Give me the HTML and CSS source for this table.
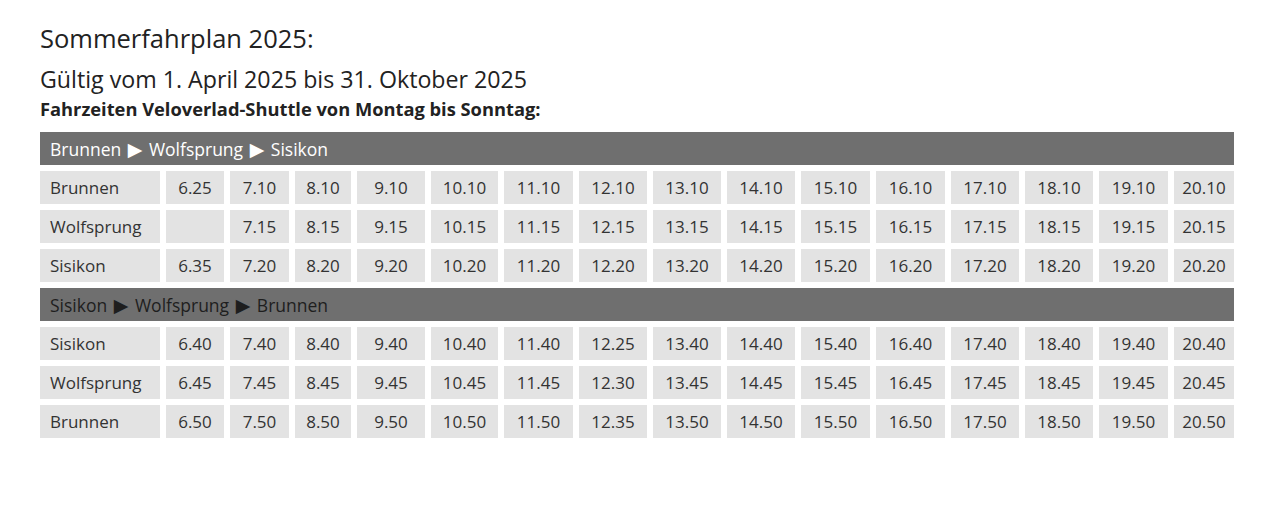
FILE: index.html
```html
<!DOCTYPE html>
<html lang="de">
<head>
<meta charset="utf-8">
<title>Sommerfahrplan 2025</title>
<link rel="stylesheet" href="styles.css">
</head>
<body>
<div class="page">
  <h1 class="title">Sommerfahrplan 2025:</h1>
  <h2 class="subtitle">Gültig vom 1. April 2025 bis 31. Oktober 2025</h2>
  <p class="lead">Fahrzeiten Veloverlad-Shuttle von Montag bis Sonntag:</p>
  <table class="timetable">
    <colgroup>
      <col class="w120"><col class="w58"><col class="w59"><col class="w56">
      <col class="w68"><col class="w67"><col class="w69"><col class="w68">
      <col class="w68"><col class="w68"><col class="w69"><col class="w69">
      <col class="w68"><col class="w68"><col class="w69"><col class="w60">
    </colgroup>
    <tbody>
      <tr><td class="route route-light" colspan="16">Brunnen <span class="arrow">▶</span> Wolfsprung <span class="arrow">▶</span> Sisikon</td></tr>
      <tr><td class="stop">Brunnen</td><td>6.25</td><td>7.10</td><td>8.10</td><td>9.10</td><td>10.10</td><td>11.10</td><td>12.10</td><td>13.10</td><td>14.10</td><td>15.10</td><td>16.10</td><td>17.10</td><td>18.10</td><td>19.10</td><td>20.10</td></tr>
      <tr><td class="stop">Wolfsprung</td><td></td><td>7.15</td><td>8.15</td><td>9.15</td><td>10.15</td><td>11.15</td><td>12.15</td><td>13.15</td><td>14.15</td><td>15.15</td><td>16.15</td><td>17.15</td><td>18.15</td><td>19.15</td><td>20.15</td></tr>
      <tr><td class="stop">Sisikon</td><td>6.35</td><td>7.20</td><td>8.20</td><td>9.20</td><td>10.20</td><td>11.20</td><td>12.20</td><td>13.20</td><td>14.20</td><td>15.20</td><td>16.20</td><td>17.20</td><td>18.20</td><td>19.20</td><td>20.20</td></tr>
      <tr><td class="route route-dark" colspan="16">Sisikon <span class="arrow">▶</span> Wolfsprung <span class="arrow">▶</span> Brunnen</td></tr>
      <tr><td class="stop">Sisikon</td><td>6.40</td><td>7.40</td><td>8.40</td><td>9.40</td><td>10.40</td><td>11.40</td><td>12.25</td><td>13.40</td><td>14.40</td><td>15.40</td><td>16.40</td><td>17.40</td><td>18.40</td><td>19.40</td><td>20.40</td></tr>
      <tr><td class="stop">Wolfsprung</td><td>6.45</td><td>7.45</td><td>8.45</td><td>9.45</td><td>10.45</td><td>11.45</td><td>12.30</td><td>13.45</td><td>14.45</td><td>15.45</td><td>16.45</td><td>17.45</td><td>18.45</td><td>19.45</td><td>20.45</td></tr>
      <tr><td class="stop">Brunnen</td><td>6.50</td><td>7.50</td><td>8.50</td><td>9.50</td><td>10.50</td><td>11.50</td><td>12.35</td><td>13.50</td><td>14.50</td><td>15.50</td><td>16.50</td><td>17.50</td><td>18.50</td><td>19.50</td><td>20.50</td></tr>
    </tbody>
  </table>
</div>
</body>
</html>
```
FILE: styles.css
```css
html, body {
  margin: 0;
  padding: 0;
  background: #ffffff;
}

.page {
  padding: 23px 40px 0 40px;
  font-family: "Open Sans", "Noto Sans", "DejaVu Sans", sans-serif;
  color: #222222;
}

.title {
  margin: 0;
  font-size: 25.5px;
  line-height: 30px;
  font-weight: 400;
  color: #222222;
}

.subtitle {
  margin: 12px 0 0 0;
  font-size: 23.2px;
  line-height: 28px;
  font-weight: 400;
  color: #222222;
}

.lead {
  margin: 5px 0 0 0;
  font-size: 18.3px;
  line-height: 22px;
  font-weight: 700;
  color: #222222;
}

.timetable {
  margin: 6px -6px 0 -6px;
  width: calc(100% + 12px);
  table-layout: fixed;
  border-collapse: separate;
  border-spacing: 6px;
  font-size: 17px;
  color: #333333;
}

.timetable td {
  height: 33px;
  padding: 0;
  background: #e3e3e3;
  text-align: center;
  vertical-align: middle;
  white-space: nowrap;
  line-height: 20px;
}

.timetable td.stop {
  text-align: left;
  padding-left: 10px;
}

.timetable td.route {
  background: #6f6f6f;
  text-align: left;
  padding-left: 10px;
  font-size: 17.5px;
}

.route-light { color: #ffffff; }
.route-dark { color: #1e1e1e; }

.arrow {
  font-family: "DejaVu Sans", sans-serif;
  font-size: 19px;
  line-height: 0;
  margin: 0 2px;
}

.w56 { width: 56px; }
.w58 { width: 58px; }
.w59 { width: 59px; }
.w60 { width: 60px; }
.w67 { width: 67px; }
.w68 { width: 68px; }
.w69 { width: 69px; }
.w120 { width: 120px; }
```
